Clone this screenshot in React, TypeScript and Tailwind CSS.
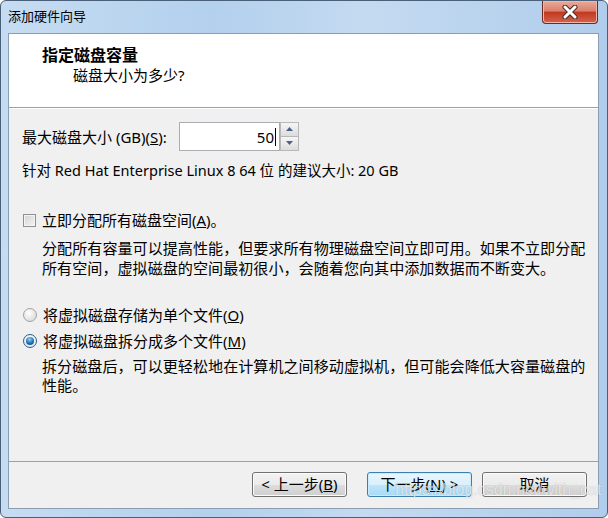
function Radio({ checked }: { checked?: boolean }) {
  return (
    <span
      className={`flex h-[14px] w-[14px] shrink-0 items-center justify-center rounded-full border ${
        checked
          ? "border-[#2c5d86] bg-[radial-gradient(circle_at_50%_40%,#ffffff,#d6e4ef)]"
          : "border-[#a3a3a3] bg-[radial-gradient(circle_at_40%_35%,#ffffff,#d0d0d0)]"
      }`}
    >
      {checked && (
        <span className="h-[8px] w-[8px] rounded-full bg-[radial-gradient(circle_at_45%_30%,#8fd3f7,#1f6fb0_55%,#0c3f6b)]" />
      )}
    </span>
  );
}

function Btn({ children, main, w }: { children: React.ReactNode; main?: boolean; w: string }) {
  return (
    <div
      className={`flex h-[25px] items-center justify-center rounded-[3px] border ${w} ${
        main
          ? "border-[#3c7fb1] bg-[linear-gradient(#eaf6fd,#d9f0fc_50%,#bee6fd_51%,#a7d9f5)] shadow-[inset_0_0_0_1px_#c8ecfd]"
          : "border-[#707070] bg-[linear-gradient(#f2f2f2,#ebebeb_50%,#dddddd_51%,#cfcfcf)] shadow-[inset_0_0_0_1px_#fcfcfc]"
      }`}
    >
      {children}
    </div>
  );
}

export default function App() {
  return (
    <div className="relative flex h-[518px] w-[608px] flex-col overflow-hidden rounded-[6px] border border-[#4a5f78] bg-[linear-gradient(90deg,#c6dcf2,#b3d0ed_35%,#c4daf1_60%,#b0cdeb)] text-[15px] text-black [font-family:'Noto_Sans','Noto_Sans_CJK_SC',sans-serif]">
      {/* title bar */}
      <div className="flex h-[32px] shrink-0 items-start justify-between">
        <span className="pl-[7px] pt-[5px] text-[13px] leading-[20px]">添加硬件向导</span>
        <div className="mr-[9px] flex h-[23px] w-[56px] items-center justify-center rounded-b-[4px] border border-t-0 border-[#6b2a22] bg-[linear-gradient(#eaab9c,#d9806b_45%,#c2391f_52%,#d4644d)] shadow-[inset_0_0_0_1px_#efb7aa]">
          <svg width="18" height="14" viewBox="0 0 18 14">
            <path d="M4 2 L14 12 M14 2 L4 12" stroke="#4a2a25" strokeWidth="5" strokeLinecap="round" />
            <path d="M4 2 L14 12 M14 2 L4 12" stroke="#ffffff" strokeWidth="3" strokeLinecap="round" />
          </svg>
        </div>
      </div>

      {/* client area */}
      <div className="mb-[8px] ml-[7px] mr-[8px] flex flex-1 flex-col border border-[#8b9db3] bg-[#f0f0f0]">
        <div className="h-[74px] shrink-0 border-b border-[#a0a0a0] bg-white">
          <div className="pl-[33px] pt-[11px] text-[16px] font-bold leading-[20px]">指定磁盘容量</div>
          <div className="pl-[64px] leading-[20px]">磁盘大小为多少?</div>
        </div>
        <div className="h-px bg-white" />

        <div className="flex-1 pl-[13px]">
          <div className="mt-[13px] flex h-[29px] items-center">
            <span className="w-[157px] leading-[20px]">
              最大磁盘大小 (GB)(<span className="underline">S</span>):
            </span>
            <div className="flex h-[29px] w-[101px] items-center justify-end border border-[#abadb3] bg-white pr-[3px]">
              <span className="leading-[20px]">50</span>
              <span className="ml-px h-[18px] w-px bg-black" />
            </div>
            <div className="flex h-[29px] w-[19px] flex-col">
              <div className="flex h-[14.5px] items-center justify-center border border-[#b8b8b8] bg-[linear-gradient(#f6f6f6,#dcdcdc)]">
                <svg width="7" height="4" viewBox="0 0 7 4">
                  <path d="M0 4 L3.5 0 L7 4 Z" fill="#4d6185" />
                </svg>
              </div>
              <div className="flex h-[14.5px] items-center justify-center border border-t-0 border-[#b8b8b8] bg-[linear-gradient(#f6f6f6,#dcdcdc)]">
                <svg width="7" height="4" viewBox="0 0 7 4">
                  <path d="M0 0 L3.5 4 L7 0 Z" fill="#4d6185" />
                </svg>
              </div>
            </div>
          </div>

          <div className="mt-[9px] text-[14.5px] leading-[20px]">
            针对 Red Hat Enterprise Linux 8 64 位 的建议大小: 20 GB
          </div>

          <div className="mt-[30px] flex items-center gap-[6px] pl-[1px]">
            <span className="h-[13px] w-[13px] shrink-0 border border-[#8e8f8f] bg-[linear-gradient(135deg,#d4d4d4,#f4f4f4)] shadow-[inset_0_0_0_1px_#f4f4f4]" />
            <span className="leading-[20px]">
              立即分配所有磁盘空间(<span className="underline">A</span>)。
            </span>
          </div>
          <div className="mt-[8px] whitespace-nowrap pl-[20px] text-[15.1px] leading-[20px]">
            分配所有容量可以提高性能，但要求所有物理磁盘空间立即可用。如果不立即分配
            <br />
            所有空间，虚拟磁盘的空间最初很小，会随着您向其中添加数据而不断变大。
          </div>

          <div className="mt-[27px] flex items-center gap-[6px] pl-[1px]">
            <Radio />
            <span className="leading-[20px]">
              将虚拟磁盘存储为单个文件(<span className="underline">O</span>)
            </span>
          </div>
          <div className="mt-[6px] flex items-center gap-[6px] pl-[1px]">
            <Radio checked />
            <span className="leading-[20px]">
              将虚拟磁盘拆分成多个文件(<span className="underline">M</span>)
            </span>
          </div>
          <div className="mt-[6px] whitespace-nowrap pl-[20px] text-[15.1px] leading-[19px]">
            拆分磁盘后，可以更轻松地在计算机之间移动虚拟机，但可能会降低大容量磁盘的
            <br />
            性能。
          </div>
        </div>

        <div className="h-[47px] shrink-0 border-t border-[#a0a0a0]">
          <div className="flex justify-end pr-[11px] pt-[10px]">
            <Btn w="w-[95px]">
              &lt; 上一步(<span className="underline">B</span>)
            </Btn>
            <div className="w-[20px]" />
            <Btn w="w-[105px]" main>
              下一步(<span className="underline">N</span>) &gt;
            </Btn>
            <div className="w-[10px]" />
            <Btn w="w-[105px]">取消</Btn>
          </div>
        </div>
      </div>

      {/* csdn watermark */}
      <div className="pointer-events-none absolute left-[394px] top-[479px] text-[16px] leading-[20px] text-white/70 [font-family:'Liberation_Sans',sans-serif] [text-shadow:0_0_1px_rgba(0,0,0,0.25)]">
        https://blog.csdn.net/with_cat
      </div>
    </div>
  );
}
